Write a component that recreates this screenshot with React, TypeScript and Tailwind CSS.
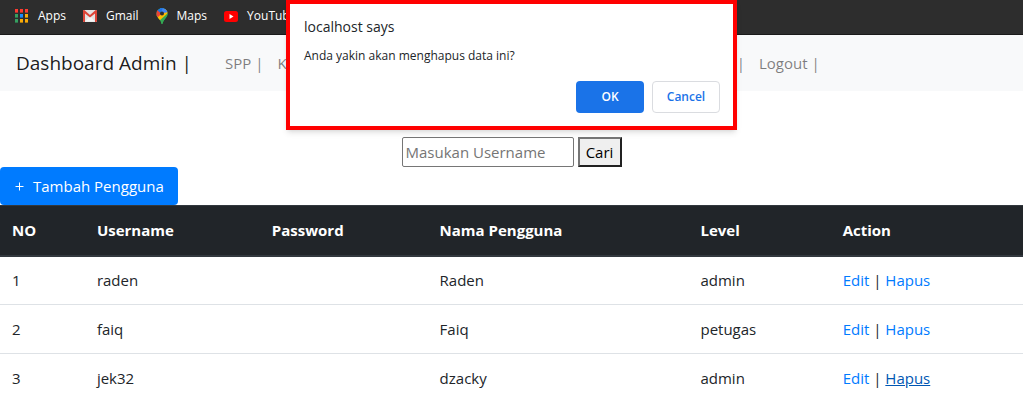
import type { ReactNode } from "react";

const appColors = [
  "#ff3b30", "#ff3b30", "#ff3b30",
  "#34a060", "#1a8cff", "#fbab05",
  "#34a060", "#fbab05", "#fbab05",
];

function AppsIcon() {
  return (
    <svg width="14" height="14" viewBox="0 0 14 14" aria-hidden="true">
      {appColors.map((color, i) => (
        <g key={i}>
          <rect x={(i % 3) * 5} y={Math.floor(i / 3) * 5} width="3" height="3" fill={color} />
          <rect x={(i % 3) * 5} y={Math.floor(i / 3) * 5 + 3} width="3" height="1" fill={color} opacity="0.6" />
        </g>
      ))}
    </svg>
  );
}

function GmailIcon() {
  return (
    <svg width="14" height="12" viewBox="0 0 14 12" aria-hidden="true">
      <rect width="14" height="12" rx="1" fill="#e3e3e3" />
      <path d="M2 11.5 7 6l5 5.5z" fill="#f5f5f5" />
      <path d="M0 1v10a1 1 0 0 0 1 1h1V3.4l5 4.2 5-4.2V12h1a1 1 0 0 0 1-1V1a1 1 0 0 0-1.6-.8L7 5 1.6.2A1 1 0 0 0 0 1z" fill="#dc4437" />
    </svg>
  );
}

function MapsIcon() {
  return (
    <svg width="12" height="16" viewBox="0 0 12 16" aria-hidden="true">
      <clipPath id="pin">
        <path d="M6 0a5.6 5.6 0 0 0-5.6 5.6c0 2 .9 3.3 2.3 5C4 12.200 4.900 13.500 5.300 15.300c.2.8 1.200.8 1.400 0 .4-1.800 1.300-3.100 2.600-4.700 1.400-1.700 2.300-3 2.300-5A5.600 5.600 0 0 0 6 0z" />
      </clipPath>
      <g clipPath="url(#pin)">
        <rect width="12" height="16" fill="#34a853" />
        <path d="M0 12V7l6-1.400L2.500 11z" fill="#fbbc04" />
        <path d="M0 12l9-11 3 0v4L3 13z" fill="#fbbc04" />
        <path d="M12 2v14H3.500L12 5z" fill="#34a853" />
        <path d="M4 0h8v4L6 5.600z" fill="#4285f4" />
        <path d="M0 9V2l1.800 0L6 5.600 2 9z" fill="#ea4335" />
        <path d="M1 2 5 0h2L4.500 5z" fill="#1a73e8" />
      </g>
      <circle cx="6" cy="5.600" r="2" fill="#2d2d2d" />
    </svg>
  );
}

function YouTubeIcon() {
  return (
    <svg width="14" height="11" viewBox="0 0 14 11" aria-hidden="true">
      <rect width="14" height="11" rx="2.500" fill="#f00" />
      <path d="M5.500 3v5l4-2.500z" fill="#fff" />
    </svg>
  );
}

function Bookmark({ icon, children }: { icon: ReactNode; children: ReactNode }) {
  return (
    <a href="#" className="flex items-center gap-[9px]">
      {icon}
      {children}
    </a>
  );
}

const users = [
  { no: 1, username: "raden", name: "Raden", level: "admin" },
  { no: 2, username: "faiq", name: "Faiq", level: "petugas" },
  { no: 3, username: "jek32", name: "dzacky", level: "admin" },
];

function ConfirmDialog() {
  return (
    <div
      role="dialog"
      aria-labelledby="confirm-title"
      className="absolute inset-x-0 top-0 mx-auto w-[451px] border-4 border-[#ff0000] bg-white pt-[11px] pr-[13px] pb-[13px] pl-3.5 shadow-md"
    >
      <h2 id="confirm-title" className="text-sm leading-6">localhost says</h2>
      <p className="mt-[5px] text-xs leading-6">Anda yakin akan menghapus data ini?</p>
      <div className="mt-[13px] flex justify-end gap-2 text-xs font-semibold">
        <button type="button" className="h-8 w-[68px] rounded bg-[#1a73e8] text-white">OK</button>
        <button type="button" className="h-8 w-[68px] rounded border border-[#dadce0] text-[#1a73e8]">Cancel</button>
      </div>
    </div>
  );
}

export default function App() {
  return (
    <div className="relative bg-white font-['Open_Sans','Noto_Sans',sans-serif] text-[15px] leading-6 text-[#212529]">
      <nav aria-label="Bookmarks" className="flex h-[35px] items-center gap-[17px] border-b border-[#1a1a1a] bg-[#2d2d2d] px-[15px] pb-0.5 text-xs text-white">
        <Bookmark icon={<AppsIcon />}>Apps</Bookmark>
        <Bookmark icon={<GmailIcon />}>Gmail</Bookmark>
        <Bookmark icon={<MapsIcon />}>Maps</Bookmark>
        <Bookmark icon={<YouTubeIcon />}>YouTube</Bookmark>
      </nav>

      <nav aria-label="Main" className="flex h-14 items-center gap-[33px] bg-[#f8f9fa] px-4">
        <a href="#" className="text-[19px] text-black/90">Dashboard Admin |</a>
        <ul className="flex w-3/5 gap-3.5 text-black/50">
          <li><a href="#">SPP |</a></li>
          <li><a href="#">Kelas |</a></li>
          <li className="grow text-right"><a href="#">Pengguna |</a></li>
          <li><a href="#">Logout |</a></li>
        </ul>
      </nav>

      <main className="pt-[46px]">
        <form className="flex justify-center gap-1" onSubmit={(e) => e.preventDefault()}>
          <input
            type="text"
            aria-label="Username"
            placeholder="Masukan Username"
            className="h-[30px] w-[172px] rounded-xs border border-[#767676] px-[3px] placeholder:text-[#757575]"
          />
          <button type="submit" className="h-[30px] w-11 border-2 border-t-[#767676] border-r-[#212121] border-b-[#212121] border-l-[#767676] bg-[#efefef] text-black">Cari</button>
        </form>
        <button type="button" className="flex h-[38px] items-center gap-2 rounded bg-[#007bff] px-3.5 text-white">
          <svg width="11" height="11" viewBox="0 0 11 11" aria-hidden="true">
            <path d="M5.500 1.500v8M1.500 5.500h8" stroke="currentColor" />
          </svg>
          Tambah Pengguna
        </button>
        <table className="w-full table-fixed border-collapse text-left">
          <thead className="bg-[#212529] text-white">
            <tr className="h-[50px] border-t border-b-2 border-[#32383e]">
              <th className="w-[8.3%] px-3">NO</th>
              <th className="w-[17.1%] px-3">Username</th>
              <th className="w-[16.4%] px-3">Password</th>
              <th className="w-[25.5%] px-3">Nama Pengguna</th>
              <th className="w-[13.9%] px-3">Level</th>
              <th className="px-3">Action</th>
            </tr>
          </thead>
          <tbody>
            {users.map((user) => (
              <tr key={user.no} className="h-[49px] border-b border-[#dee2e6] last:border-b-0">
                <td className="px-3">{user.no}</td>
                <td className="px-3">{user.username}</td>
                <td className="px-3" />
                <td className="px-3">{user.name}</td>
                <td className="px-3">{user.level}</td>
                <td className="px-3">
                  <a href="#" className="text-[#007bff]">Edit</a> |{" "}
                  <a href="#" className={user.no === 3 ? "text-[#0056b3] underline" : "text-[#007bff]"}>Hapus</a>
                </td>
              </tr>
            ))}
          </tbody>
        </table>
      </main>

      <ConfirmDialog />
    </div>
  );
}
